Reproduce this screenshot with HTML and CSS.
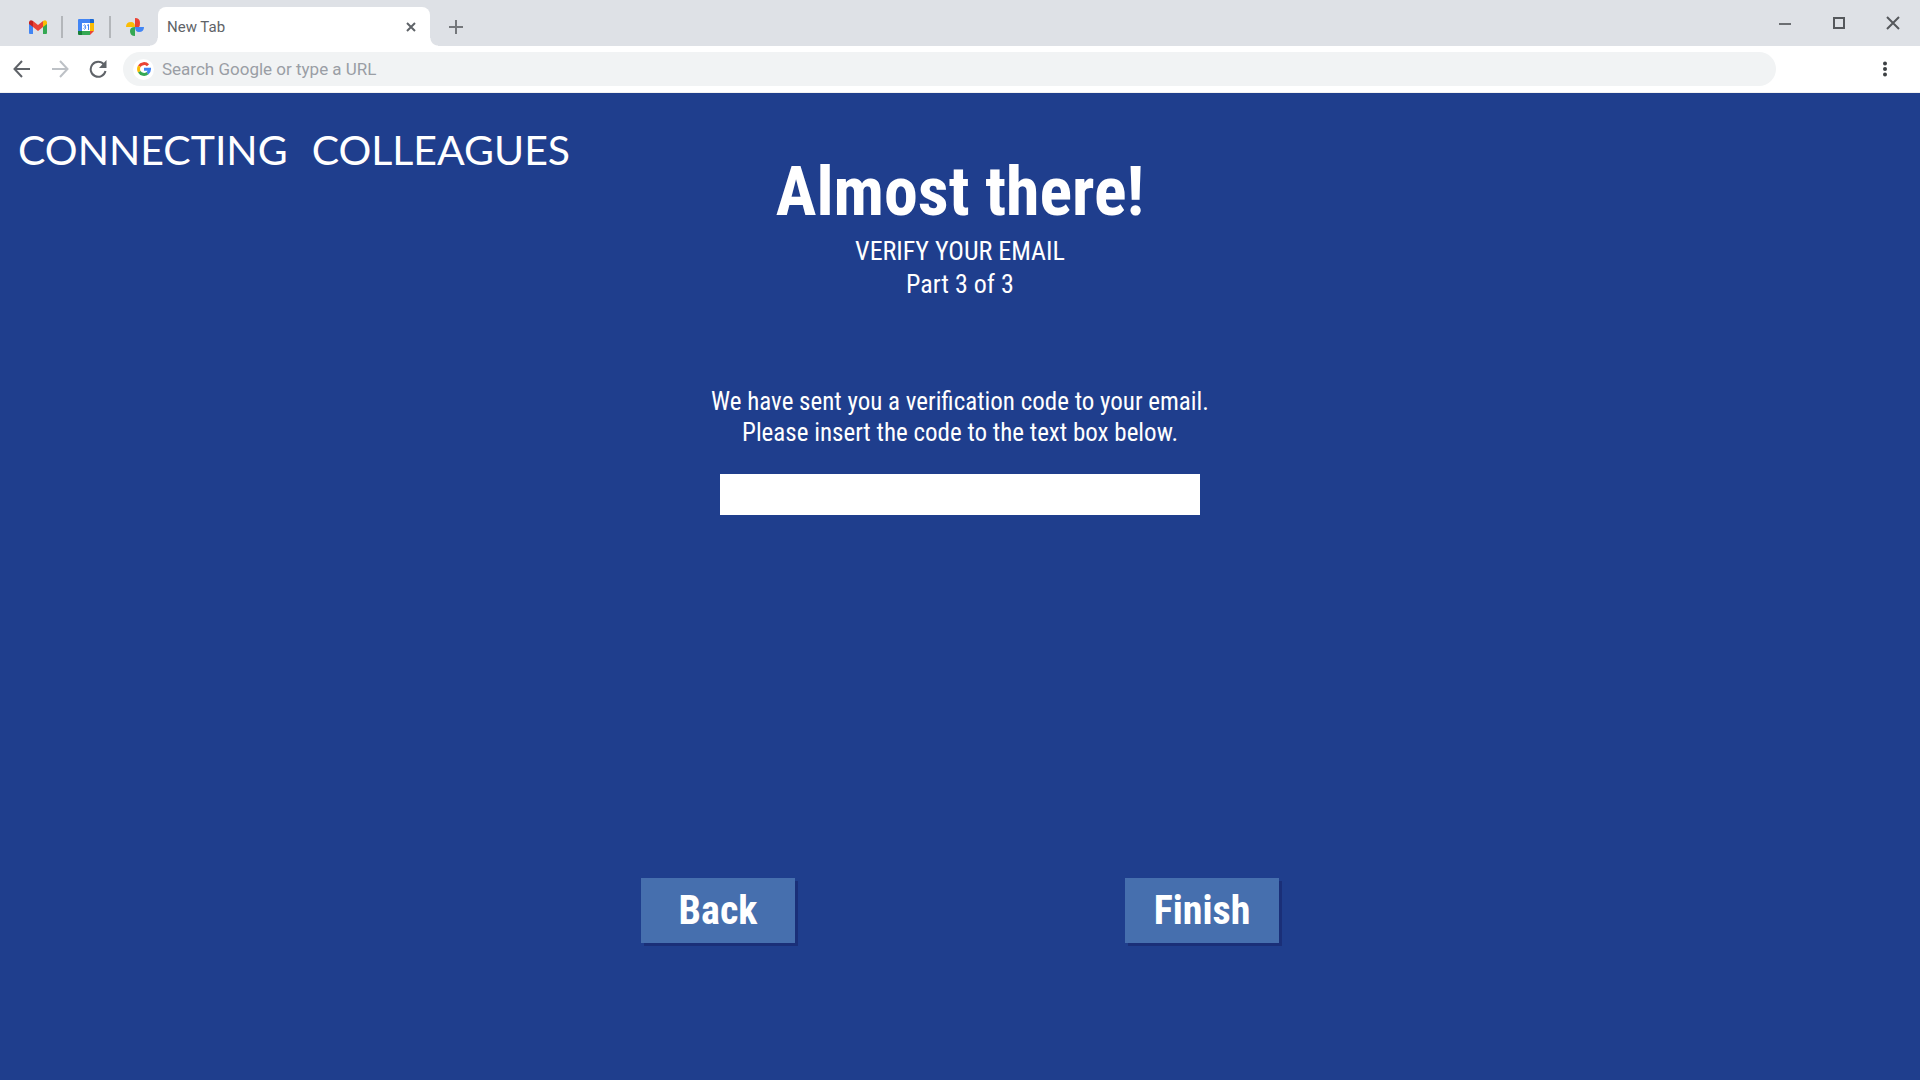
FILE: index.html
```html
<!DOCTYPE html>
<html lang="en">
<head>
<meta charset="utf-8">
<title>Connecting Colleagues</title>
<link rel="stylesheet" href="styles.css">
</head>
<body>
<header class="browser">
  <div class="tab-strip">
    <nav class="pinned" aria-label="Pinned tabs">
      <a class="pin" href="#" aria-label="Gmail">
        <svg width="18" height="14" viewBox="0 0 18 14"><path fill="#4285f4" d="M0 2v11q0 1 1 1h3V5z"/><path fill="#34a853" d="M18 3v10q0 1-1 1h-3V5z"/><path fill="#fbbc04" d="M14 1v6l4-3V2q-1-3-4-1z"/><path fill="#c5221f" d="M0 2v2l4 3V1Q1-1 0 2z"/><path fill="#ea4335" d="M4 1v6l5 4 5-4V1L9 5z"/></svg>
      </a>
      <a class="pin" href="#" aria-label="Calendar">
        <svg width="16" height="16" viewBox="0 0 16 16"><path fill="#4285f4" d="M1 0h12v4H4v8H0V1q0-1 1-1z"/><path fill="#1967d2" d="M12 0h3q1 0 1 1v3h-4z"/><path fill="#fbbc04" d="M12 4h4v8h-4z"/><path fill="#34a853" d="M4 12h8v4H4z"/><path fill="#188038" d="M0 12h4v4H1q-1 0-1-1z"/><path fill="#ea4335" d="M12 12h4l-4 4z"/><path fill="#fff" d="M4 4h8v8H4z"/><path fill="none" stroke="#4285f4" d="M5.500 6.500q1.500-1.500 2 0t-1 1.500q2 0 1 1.500t-2 0M9 6.500l1.500-1V11"/></svg>
      </a>
      <a class="pin" href="#" aria-label="Photos">
        <svg width="18" height="18" viewBox="0 0 18 18"><path fill="#ea4335" d="M9 0q5 0 5 5 0 3-1 4H9z"/><path fill="#4285f4" d="M9 9h9q0 5-5 5-4 0-4-5z"/><path fill="#34a853" d="M9 9v9q-5 0-5-5 0-4 5-4z"/><path fill="#fbbc04" d="M0 9q0-5 5-5 4 0 4 5z"/></svg>
      </a>
    </nav>
    <div class="tab">
      <span>New Tab</span>
      <button class="icon-button" aria-label="Close tab"><svg width="10" height="10" viewBox="0 0 10 10"><path d="M1 1l8 8M9 1l-8 8" stroke="#5f6368" stroke-width="2"/></svg></button>
    </div>
    <button class="icon-button new-tab" aria-label="New tab"><svg width="14" height="14" viewBox="0 0 14 14"><path d="M7 0v14M0 7h14" stroke="#74777b" stroke-width="2"/></svg></button>
    <div class="window-controls">
      <button class="icon-button" aria-label="Minimize"><svg width="14" height="14" viewBox="0 0 14 14"><path d="M1 8h12" stroke="#6b6e72" stroke-width="2"/></svg></button>
      <button class="icon-button" aria-label="Maximize"><svg width="14" height="14" viewBox="0 0 14 14"><path d="M2 2h10v10H2z" fill="none" stroke="#55585c" stroke-width="2"/></svg></button>
      <button class="icon-button" aria-label="Close"><svg width="14" height="14" viewBox="0 0 14 14"><path d="M1 1l12 12M13 1L1 13" stroke="#55585c" stroke-width="2"/></svg></button>
    </div>
  </div>
  <div class="toolbar">
    <button class="icon-button" aria-label="Back in history"><svg width="18" height="18" viewBox="0 0 18 18"><path d="M17 9H2M9 1L1.500 9 9 17" fill="none" stroke="#5f6368" stroke-width="2"/></svg></button>
    <button class="icon-button" aria-label="Forward in history"><svg width="18" height="18" viewBox="0 0 18 18"><path d="M1 9h15M9 1l7.500 8L9 17" fill="none" stroke="#bdc1c6" stroke-width="2"/></svg></button>
    <button class="icon-button" aria-label="Reload"><svg width="18" height="18" viewBox="0 0 18 18"><path d="M15 4.500a7.500 7.500 0 1 0 1.500 6.500" fill="none" stroke="#5f6368" stroke-width="2"/><path d="M17.500 0v8H10z" fill="#5f6368"/></svg></button>
    <div class="omnibox">
      <span class="google"><svg width="14" height="14" viewBox="0 0 14 14" fill="none" stroke-width="3"><path stroke="#ea4335" d="M2.300 4.300A5.500 5.500 0 0 1 11 3.300"/><path stroke="#fbbc04" d="M2.300 4.300a5.500 5.500 0 0 0 0 5.400"/><path stroke="#34a853" d="M2.300 9.700a5.500 5.500 0 0 0 8.200 1.500"/><path stroke="#4285f4" d="M7 7.300h5.500q0 2.500-2 3.900"/></svg></span>
      <input class="address" type="text" aria-label="Address" placeholder="Search Google or type a URL">
    </div>
    <button class="icon-button" aria-label="Menu"><svg width="6" height="18" viewBox="0 0 6 18" fill="#3c4043"><circle cx="3" cy="3.500" r="2"/><circle cx="3" cy="9" r="2"/><circle cx="3" cy="14.500" r="2"/></svg></button>
  </div>
</header>
<main class="page">
  <div class="intro">
    <a class="brand" href="#"><span>CONNECTING</span> <span>COLLEAGUES</span></a>
    <div class="heading">
      <h1>Almost there!</h1>
      <p>VERIFY YOUR EMAIL<br>Part 3 of 3</p>
    </div>
  </div>
  <form class="verify">
    <label for="code">We have sent you a verification code to your email.<br>Please insert the code to the text box below.</label>
    <input class="code" id="code" type="text">
    <div class="actions">
      <button class="action" type="button">Back</button>
      <button class="action" type="submit">Finish</button>
    </div>
  </form>
</main>
</body>
</html>
```
FILE: styles.css
```css
* { box-sizing: border-box; }

body {
  margin: 0;
  min-height: 100vh;
  display: flex;
  flex-direction: column;
  background: #1f3e8d;
  color: #fff;
  font-family: "Roboto Condensed", "Arial Narrow", "Liberation Sans", sans-serif;
}

h1, p { margin: 0; }

/* Browser frame */
.browser {
  font-family: Roboto, sans-serif;
  background: #fff;
  border-bottom: 1px solid #f1f1f1;
}

.tab-strip {
  display: flex;
  height: 46px;
  background: #dee1e6;
}

.pinned {
  display: flex;
  align-items: center;
  padding: 8px 0 0 15px;
}

.pin {
  display: flex;
  align-items: center;
  justify-content: center;
  width: 48px;
  height: 22px;
  border-right: 2px solid #b3b6ba;
}

.pin:last-child { border-right: 0; }

.tab {
  position: relative;
  display: flex;
  align-items: center;
  justify-content: space-between;
  width: 272px;
  margin-top: 7px;
  margin-left: -1px;
  padding: 0 14px 0 9px;
  background: #fff;
  border-radius: 8px 8px 0 0;
  color: #5f6368;
  font-size: 15px;
}

/* Curved feet of the active tab */
.tab::before,
.tab::after {
  content: "";
  position: absolute;
  bottom: 0;
  width: 8px;
  height: 8px;
}

.tab::before {
  right: 100%;
  background: radial-gradient(circle at 0 0, transparent 7px, #fff 8px);
}

.tab::after {
  left: 100%;
  background: radial-gradient(circle at 100% 0, transparent 7px, #fff 8px);
}

.icon-button {
  display: flex;
  align-items: center;
  justify-content: center;
  padding: 0;
  border: 0;
  background: none;
}

.new-tab { margin: 7px 0 0 19px; }

.window-controls {
  display: flex;
  gap: 40px;
  margin-left: auto;
  padding-right: 20px;
}

.toolbar {
  display: flex;
  align-items: center;
  gap: 20px;
  height: 46px;
  padding: 0 32px 0 13px;
}

.omnibox {
  display: flex;
  align-items: center;
  gap: 8px;
  flex: 1;
  height: 34px;
  margin: 0 86px 0 -4px;
  padding-left: 10px;
  border-radius: 17px;
  background: #f1f3f4;
}

.google {
  display: flex;
  align-items: center;
  justify-content: center;
  width: 21px;
  height: 21px;
  border-radius: 50%;
  background: #fff;
}

.address {
  flex: 1;
  padding: 0;
  border: 0;
  outline: 0;
  background: none;
  font: 17px Roboto, sans-serif;
}

.address::placeholder { color: #9a9ea5; }

/* Sign-up page */
.page {
  flex: 1;
  padding: 32px 18px;
}

.intro {
  display: grid;
  grid-template-columns: 1fr auto 1fr;
}

.brand {
  display: flex;
  align-items: center;
  gap: 24px;
  height: 48px;
  color: #fff;
  font-family: Lato, sans-serif;
  font-size: 41px;
  text-decoration: none;
}

.heading {
  padding-top: 24px;
  text-align: center;
}

.heading h1 {
  font-size: 68px;
  line-height: 86px;
}

.heading p {
  font-size: 26px;
  line-height: 33px;
}

.verify {
  display: flex;
  flex-direction: column;
  align-items: center;
  padding-top: 85px;
}

.verify label {
  font-size: 25px;
  line-height: 31px;
  text-align: center;
}

.code {
  width: 480px;
  max-width: 100%;
  height: 41px;
  margin-top: 26px;
  padding: 0 12px;
  border: 0;
  border-radius: 0;
  background: #fff;
  font: inherit;
  font-size: 25px;
}

.actions {
  display: flex;
  gap: 330px;
  margin-top: 363px;
}

.action {
  width: 154px;
  height: 65px;
  padding: 0;
  border: 0;
  background: #466fae;
  box-shadow: 3px 3px 0 #1a2f78;
  color: #fff;
  font: inherit;
  font-size: 40px;
  font-weight: bold;
}
```
